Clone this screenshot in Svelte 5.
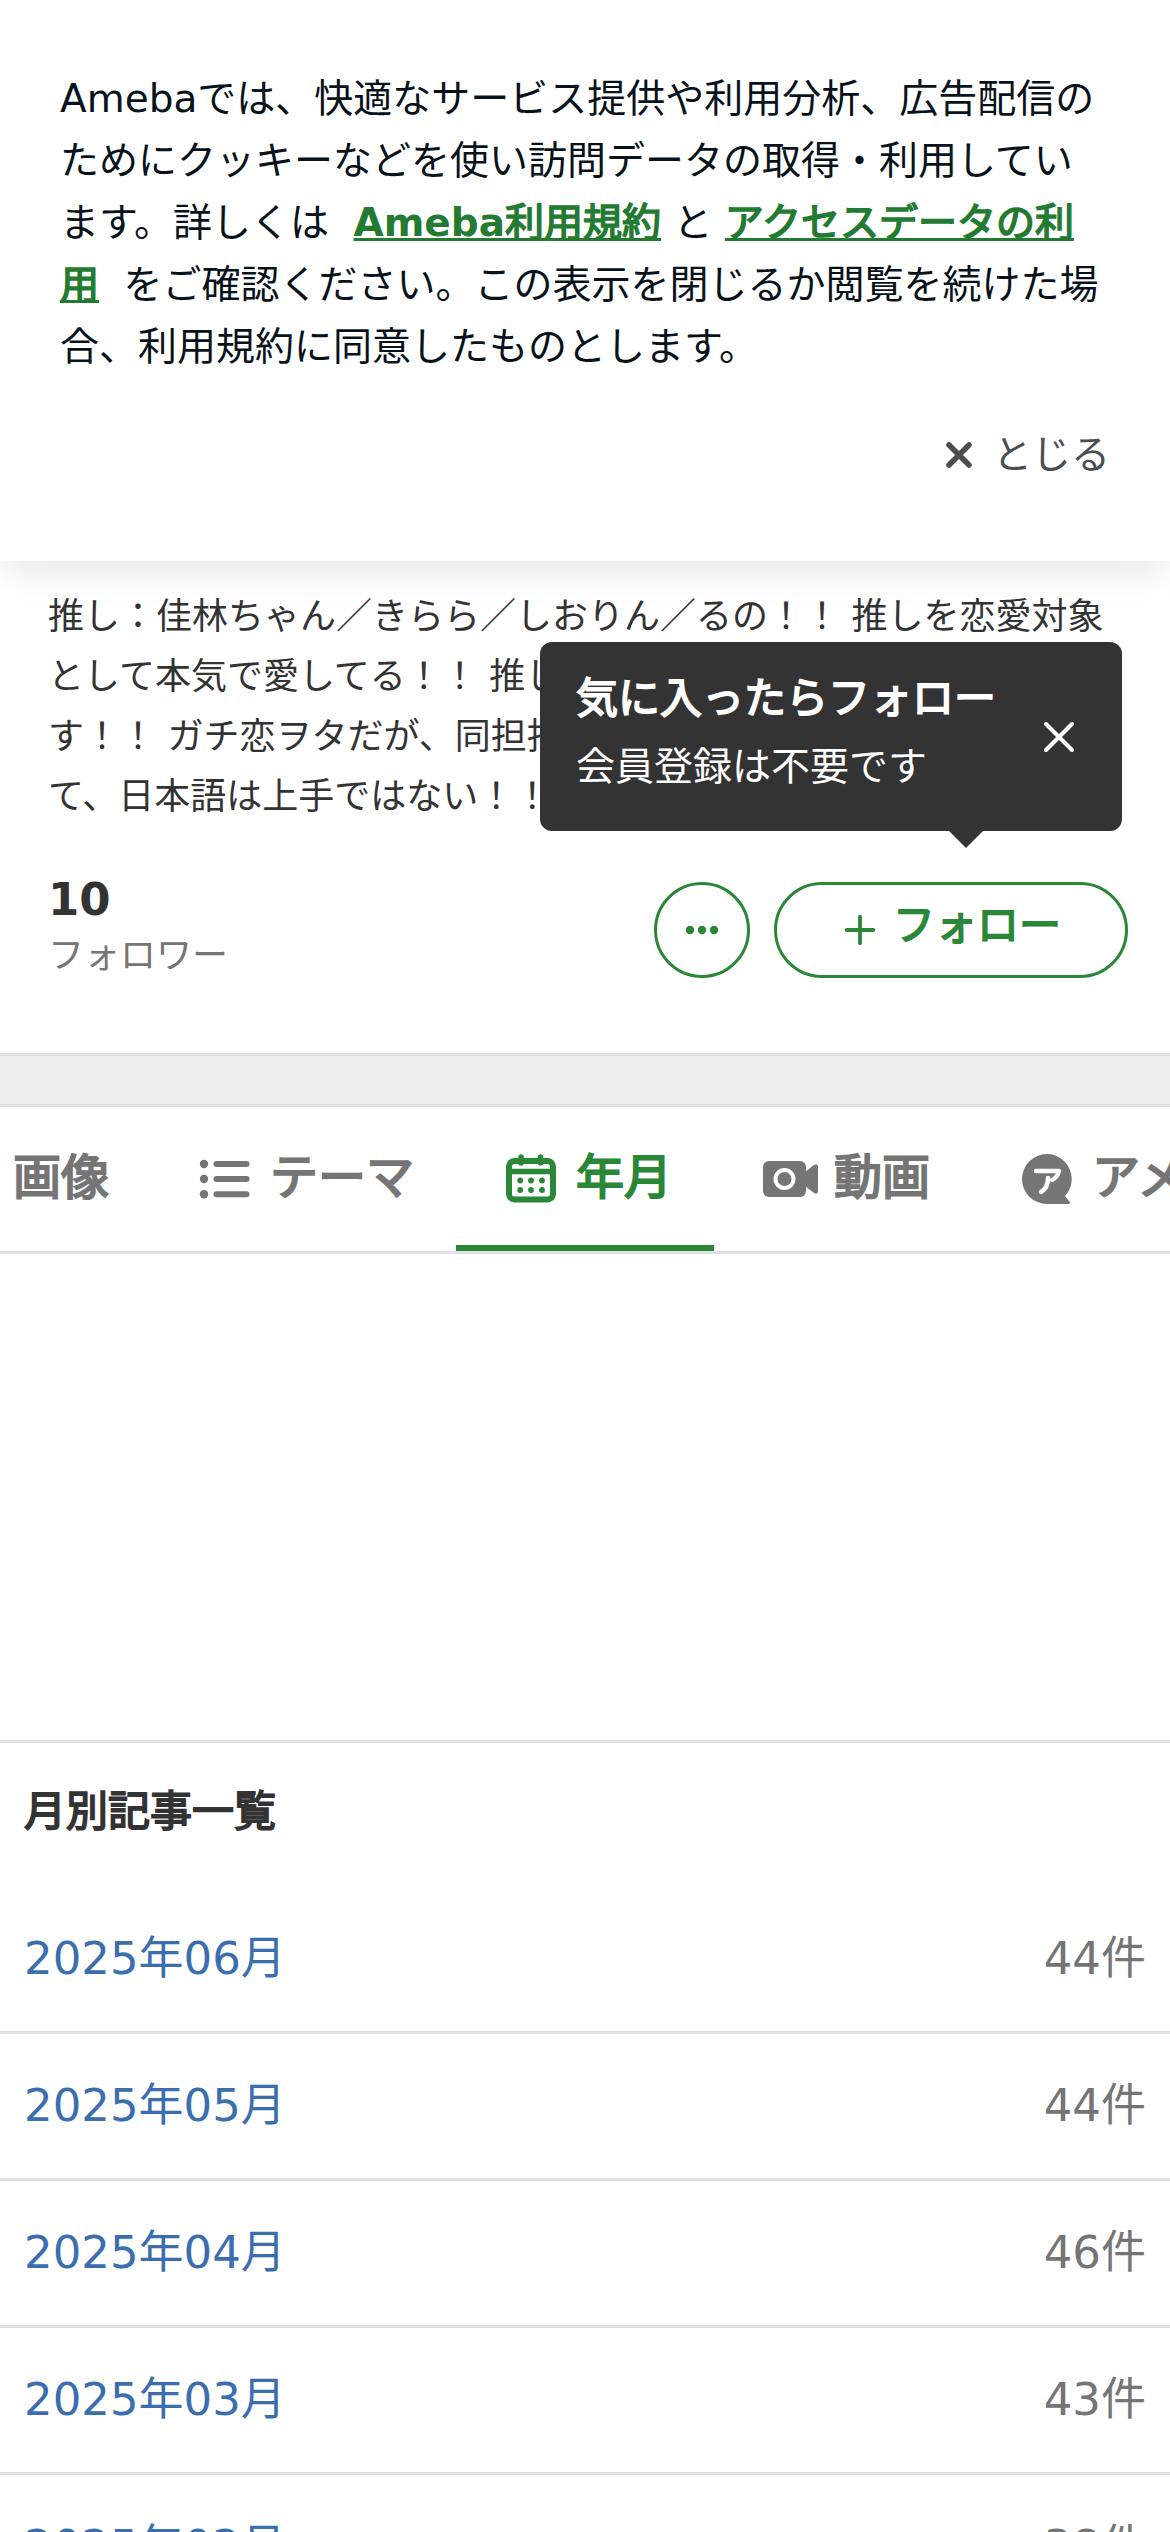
<script>
  const months = [
    ['2025年06月', 44],
    ['2025年05月', 44],
    ['2025年04月', 46],
    ['2025年03月', 43],
    ['2025年02月', 38],
  ];
</script>

<div class="page">
  <aside class="cookie">
    <p>Amebaでは、快適なサービス提供や利用分析、広告配信の<br />ためにクッキーなどを使い訪問データの取得・利用してい<br />ます。詳しくは <a class="first" href="#terms">Ameba<span class="heavy">利用規約</span></a> と <a class="second heavy" href="#data">アクセスデータの利<br />用</a> をご確認ください。この表示を閉じるか閲覧を続けた場<br />合、利用規約に同意したものとします。</p>
    <button class="dismiss">
      <svg width="28" height="28" viewBox="0 0 28 28"><path d="M4 4 24 24M24 4 4 24" /></svg>
      <span>とじる</span>
    </button>
  </aside>

  <section class="profile">
    <p class="bio">推し：佳林ちゃん／きらら／しおりん／るの！！ 推しを恋愛対象<br />として本気で愛してる！！ 推し<br />す！！ ガチ恋ヲタだが、同担拒<br />て、日本語は上手ではない！！</p>
    <div class="social">
      <div class="followers"><strong>10</strong><span>フォロワー</span></div>
      <div class="actions">
        <button class="more" aria-label="メニュー">
          <svg width="36" height="12" viewBox="0 0 36 12"><circle cx="6" cy="6" r="4.2" /><circle cx="18" cy="6" r="4.2" /><circle cx="30" cy="6" r="4.2" /></svg>
        </button>
        <button class="follow">
          <svg width="30" height="30" viewBox="0 0 30 30"><path d="M15 1.8V28.2M1.8 15H28.2" /></svg>
          <span class="heavy">フォロー</span>
        </button>
      </div>
    </div>
    <div class="tip">
      <div><strong class="heavy">気に入ったらフォロー</strong><span>会員登録は不要です</span></div>
      <svg width="32" height="32" viewBox="0 0 32 32"><path d="M3 3 29 29M29 3 3 29" /></svg>
    </div>
  </section>

  <div class="band"></div>

  <nav>
    <a href="#image"><span class="heavy">画像</span></a>
    <a href="#theme">
      <svg width="54" height="54" viewBox="0 0 54 54"><g fill="currentColor"><circle cx="6" cy="12" r="4.2" /><circle cx="6" cy="27" r="4.2" /><circle cx="6" cy="42.3" r="4.2" /><rect x="15.5" y="9" width="36" height="6" rx="3" /><rect x="15.5" y="24" width="36" height="6" rx="3" /><rect x="15.5" y="39.3" width="36" height="6" rx="3" /></g></svg>
      <span class="heavy">テーマ</span>
    </a>
    <a class="active" href="#month">
      <svg width="54" height="54" viewBox="0 0 54 54"><rect x="5" y="9" width="44" height="38.500" rx="5.500" fill="none" stroke="currentColor" stroke-width="6" /><path d="M5 19.500H49M17 5V11M36.500 5V11" fill="none" stroke="currentColor" stroke-width="5.500" stroke-linecap="round" /><g fill="currentColor"><circle cx="16.200" cy="28.500" r="2.900" /><circle cx="27" cy="28.500" r="2.900" /><circle cx="38" cy="28.500" r="2.900" /><circle cx="16.200" cy="38" r="2.900" /><circle cx="27" cy="38" r="2.900" /><circle cx="38" cy="38" r="2.900" /></g></svg>
      <span class="heavy">年月</span>
    </a>
    <a href="#movie">
      <svg class="movie" width="58" height="54" viewBox="0 0 58 54"><rect x="1" y="9" width="43" height="36" rx="6" fill="currentColor" /><path d="M43 20 52 13Q56 11 56 15V39Q56 43 52 41L43 34Z" fill="currentColor" /><circle cx="22.500" cy="27" r="9" fill="none" stroke="#fff" stroke-width="4" /></svg>
      <span class="heavy">動画</span>
    </a>
    <a href="#topics">
      <svg width="54" height="54" viewBox="0 0 54 54"><path d="M27 2A25 25 0 1 0 27 52H49Q51 51 49 49L45 44A25 25 0 0 0 27 2Z" fill="currentColor" /><path d="M16 19H39Q37 26 32 28M28 26Q28 36 21 40" fill="none" stroke="#fff" stroke-width="4.500" stroke-linecap="round" stroke-linejoin="round" /></svg>
      <span class="heavy">アメトピ</span>
    </a>
  </nav>

  <div class="ad"></div>

  <main>
    <h1 class="heavy">月別記事一覧</h1>
    <ul>
      {#each months as [label, count]}
        <li><a href="#archive">{label}</a><span>{count}件</span></li>
      {/each}
    </ul>
  </main>
</div>

<style>
  .page {
    height: 2532px;
    overflow: hidden;
    background: #fff;
    color: #333;
    font-family: "DejaVu Sans", "Noto Sans CJK JP", sans-serif;
    display: flex;
    flex-direction: column;
  }
  .page > * { flex-shrink: 0; box-sizing: border-box; }
  p, h1, ul { margin: 0; padding: 0; }
  button { font: inherit; background: none; border: 0; padding: 0; }
  a { text-decoration: none; color: inherit; }

  /* Regular Japanese glyphs thickened evenly by a thin outline */
  .page .heavy { font-weight: 400; -webkit-text-stroke: 0.042em currentColor; }

  .cookie {
    height: 561px;
    padding: 68px 60px 0;
    display: flex;
    flex-direction: column;
    box-shadow: 0 16px 36px -6px rgba(0, 0, 0, 0.1);
    color: #08121a;
    font-size: 39px;
    line-height: 62px;
    white-space: nowrap;
  }
  .cookie a { color: #237b31; font-weight: 700; text-decoration: underline; }
  .cookie a.first { margin-left: 12px; }
  .cookie a.second { margin-right: 12px; }
  .dismiss {
    align-self: flex-end;
    display: flex;
    align-items: center;
    gap: 20px;
    margin-top: 46px;
    color: #494e51;
  }
  .dismiss path { fill: none; stroke: #494e51; stroke-width: 5.500; stroke-linecap: round; }

  .profile { position: relative; height: 492px; padding: 26px 42px 0 48px; }
  .bio { font-size: 36px; line-height: 60px; white-space: nowrap; }
  .social { display: flex; justify-content: space-between; margin-top: 55px; }
  .followers { display: flex; flex-direction: column; }
  .followers strong { font-size: 45px; line-height: 36px; }
  .followers span { color: #757575; font-size: 36px; line-height: 40px; margin-top: 18px; }
  .actions { display: flex; gap: 24px; }
  .more, .follow {
    box-sizing: border-box;
    height: 96px;
    border: 3px solid #298737;
    border-radius: 48px;
    color: #298737;
    display: flex;
    align-items: center;
    justify-content: center;
  }
  .more { width: 96px; }
  .more circle { fill: currentColor; }
  .follow { width: 354px; gap: 18px; padding-left: 4px; font-size: 42px; line-height: 50px; }
  .follow span { margin-bottom: 8px; }
  .follow path { fill: none; stroke: currentColor; stroke-width: 3.800; stroke-linecap: round; }
  .tip {
    position: absolute;
    box-sizing: border-box;
    left: 540px;
    top: 81px;
    width: 582px;
    height: 189px;
    padding: 0 47px 0 36px;
    border-radius: 12px;
    background: #333;
    color: #fff;
    display: flex;
    align-items: center;
    justify-content: space-between;
  }
  .tip::after {
    content: "";
    position: absolute;
    left: 408px;
    top: 188px;
    border: 18px solid transparent;
    border-top-color: #333;
    border-bottom: 0;
  }
  .tip div { display: flex; flex-direction: column; white-space: nowrap; margin-bottom: 8px; }
  .tip strong { font-size: 42px; line-height: 68px; }
  .tip span { font-size: 39px; line-height: 68px; }
  .tip path { fill: none; stroke: #fff; stroke-width: 4; stroke-linecap: round; }

  .band { height: 54px; background: #eee; border: solid #e0e0e0; border-width: 3px 0; }

  nav {
    height: 147px;
    border-bottom: 3px solid #e0e0e0;
    display: flex;
    color: #757575;
    font-size: 48px;
    line-height: 60px;
    white-space: nowrap;
    overflow: hidden;
    padding-left: 13px;
  }
  nav a {
    box-sizing: border-box;
    height: 144px;
    flex-shrink: 0;
    padding: 0 42px 0 48px;
    display: flex;
    align-items: center;
    gap: 18px;
  }
  nav a:first-child { padding-left: 0; padding-right: 41px; }
  nav .active { color: #298737; box-shadow: inset 0 -6px #298737; }
  nav span { margin-bottom: 4px; }
  .movie { margin-right: -4px; }

  .ad { height: 486px; }
  main { border-top: 3px solid #e0e0e0; }
  h1 { font-size: 42px; line-height: 60px; padding: 39px 24px 45px; }
  ul { list-style: none; }
  li {
    box-sizing: border-box;
    height: 147px;
    padding: 0 24px;
    border-bottom: 3px solid #e0e0e0;
    display: flex;
    align-items: center;
    justify-content: space-between;
    font-size: 45px;
    line-height: 66px;
  }
  li a { color: #3a6eae; }
  li span { color: #757575; }
</style>
